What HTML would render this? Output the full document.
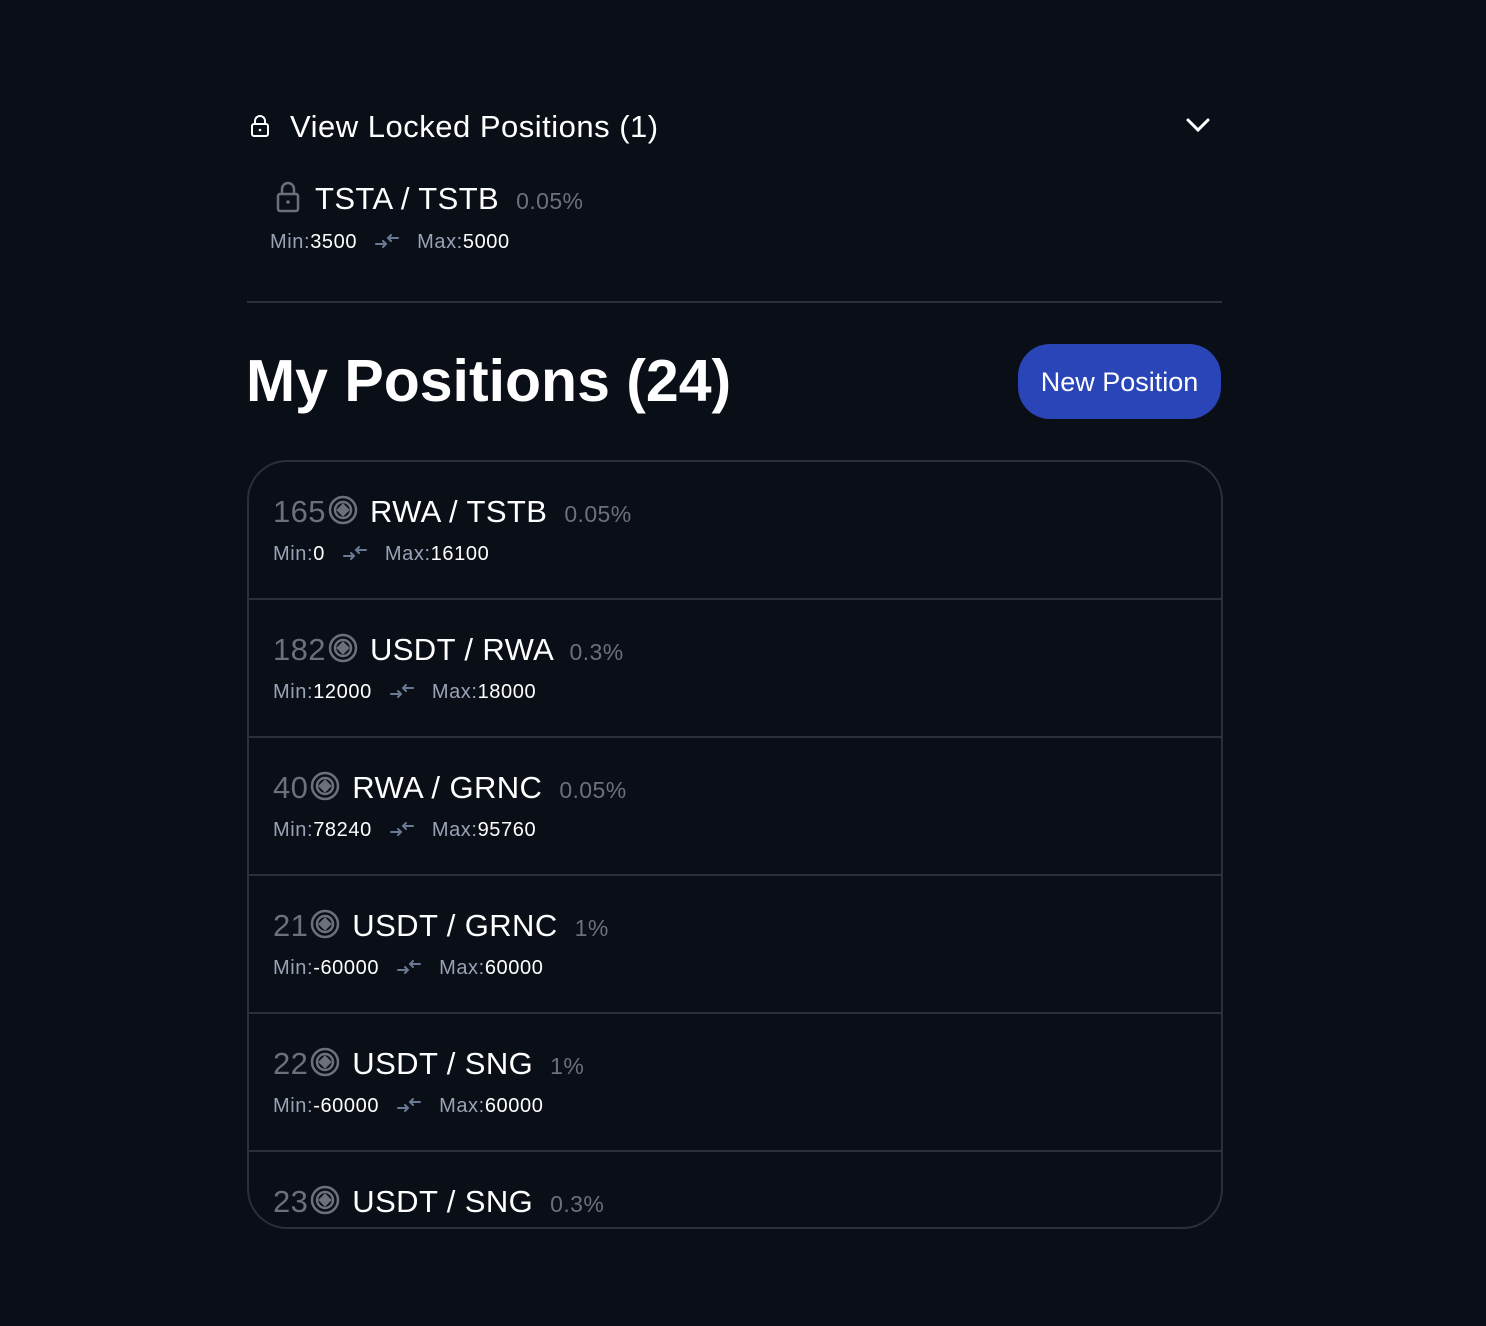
<!DOCTYPE html><html><head><style>
body{margin:0;background:#090e17;width:1486px;height:1326px;overflow:hidden;font-family:"Liberation Sans",sans-serif;color:#fff;position:relative}
.abs{position:absolute}
.t{font-size:31px;white-space:nowrap;letter-spacing:0.4px}
.g{color:#6b7079}
.m{font-size:20px;color:#fff;white-space:nowrap;letter-spacing:0.6px}
.m .l{color:#9aa3b5}
.row{position:absolute;left:0;width:974px;height:138px;box-sizing:border-box;border-bottom:2px solid #2a2f38}
.coin{display:inline-block;vertical-align:-3px;margin:0 12px 0 2px}
.arr{display:inline-block;vertical-align:-2px;margin:0 18px 0 18px}
</style></head><body>
<svg class="abs" style="left:250px;top:114px" width="20" height="24" viewBox="0 0 20 24" fill="none" stroke="#fff" stroke-width="2"><rect x="2" y="10" width="16" height="12" rx="2"/><path d="M5 10V7a5 5 0 0 1 10 0v3"/><circle cx="10" cy="16" r="1.3" fill="#fff" stroke="none"/></svg>
<div class="abs" style="left:290px;top:109px;font-size:31px;letter-spacing:0.5px">View Locked Positions (1)</div>
<svg class="abs" style="left:1186px;top:117px" width="24" height="16" viewBox="0 0 24 16" fill="none" stroke="#fff" stroke-width="3" stroke-linecap="round"><path d="M2 3l10 10L22 3"/></svg>
<svg class="abs" style="left:276px;top:181px" width="24" height="32" viewBox="0 0 24 32" fill="none" stroke="#6b7079" stroke-width="2.5"><rect x="2" y="13" width="20" height="17" rx="2"/><path d="M6 13V8a6 6 0 0 1 12 0v5"/><circle cx="12" cy="21" r="1.8" fill="#6b7079" stroke="none"/></svg>
<div class="abs t" style="left:315px;top:181px">TSTA / TSTB <span class="g" style="font-size:23px;margin-left:8px">0.05%</span></div>
<div class="abs m" style="left:270px;top:231px"><span class="l">Min:</span>3500<svg class="arr" width="24" height="18" viewBox="0 0 24 18" fill="none" stroke="#6b7a94" stroke-width="2" stroke-linecap="round"><path d="M1 12h10M8 9l3 3-3 3M23 6H13M16 3l-3 3 3 3"/></svg><span class="l">Max:</span>5000</div>
<div class="abs" style="left:247px;top:301px;width:975px;height:2px;background:#2a2f38"></div>
<div class="abs" style="left:246px;top:347px;font-size:59px;font-weight:bold">My Positions (24)</div>
<div class="abs" style="left:1018px;top:344px;width:203px;height:75px;border-radius:32px;background:#2a45b8;font-size:27px;line-height:76px;text-align:center">New Position</div>
<div class="abs" style="left:247px;top:460px;width:972px;height:765px;border:2px solid #2a2f38;border-radius:40px;overflow:hidden">
<div id="rows"></div>
</div>
<script>
var d=[["165","RWA / TSTB","0.05%","0","16100"],["182","USDT / RWA","0.3%","12000","18000"],["40","RWA / GRNC","0.05%","78240","95760"],["21","USDT / GRNC","1%","-60000","60000"],["22","USDT / SNG","1%","-60000","60000"],["23","USDT / SNG","0.3%","",""]];
var coin='<svg class="coin" width="30" height="30" viewBox="0 0 30 30" fill="none" stroke="#6b7079" stroke-width="2.5"><circle cx="15" cy="15" r="13"/><circle cx="15" cy="15" r="8"/><path d="M15 10l5 5-5 5-5-5z" fill="#6b7079"/></svg>';
var arr='<svg class="arr" width="24" height="18" viewBox="0 0 24 18" fill="none" stroke="#6b7a94" stroke-width="2" stroke-linecap="round"><path d="M1 12h10M8 9l3 3-3 3M23 6H13M16 3l-3 3 3 3"/></svg>';
var h='';d.forEach(function(r,i){h+='<div class="row" style="top:'+(i*138)+'px"><div class="abs t" style="left:24px;top:32px"><span class="g">'+r[0]+'</span>'+coin+r[1]+' <span class="g" style="font-size:23px;margin-left:8px">'+r[2]+'</span></div>'+(r[3]?'<div class="abs m" style="left:24px;top:81px"><span class="l">Min:</span>'+r[3]+arr+'<span class="l">Max:</span>'+r[4]+'</div>':'')+'</div>'});
document.getElementById('rows').innerHTML=h;
</script>
</body></html>
